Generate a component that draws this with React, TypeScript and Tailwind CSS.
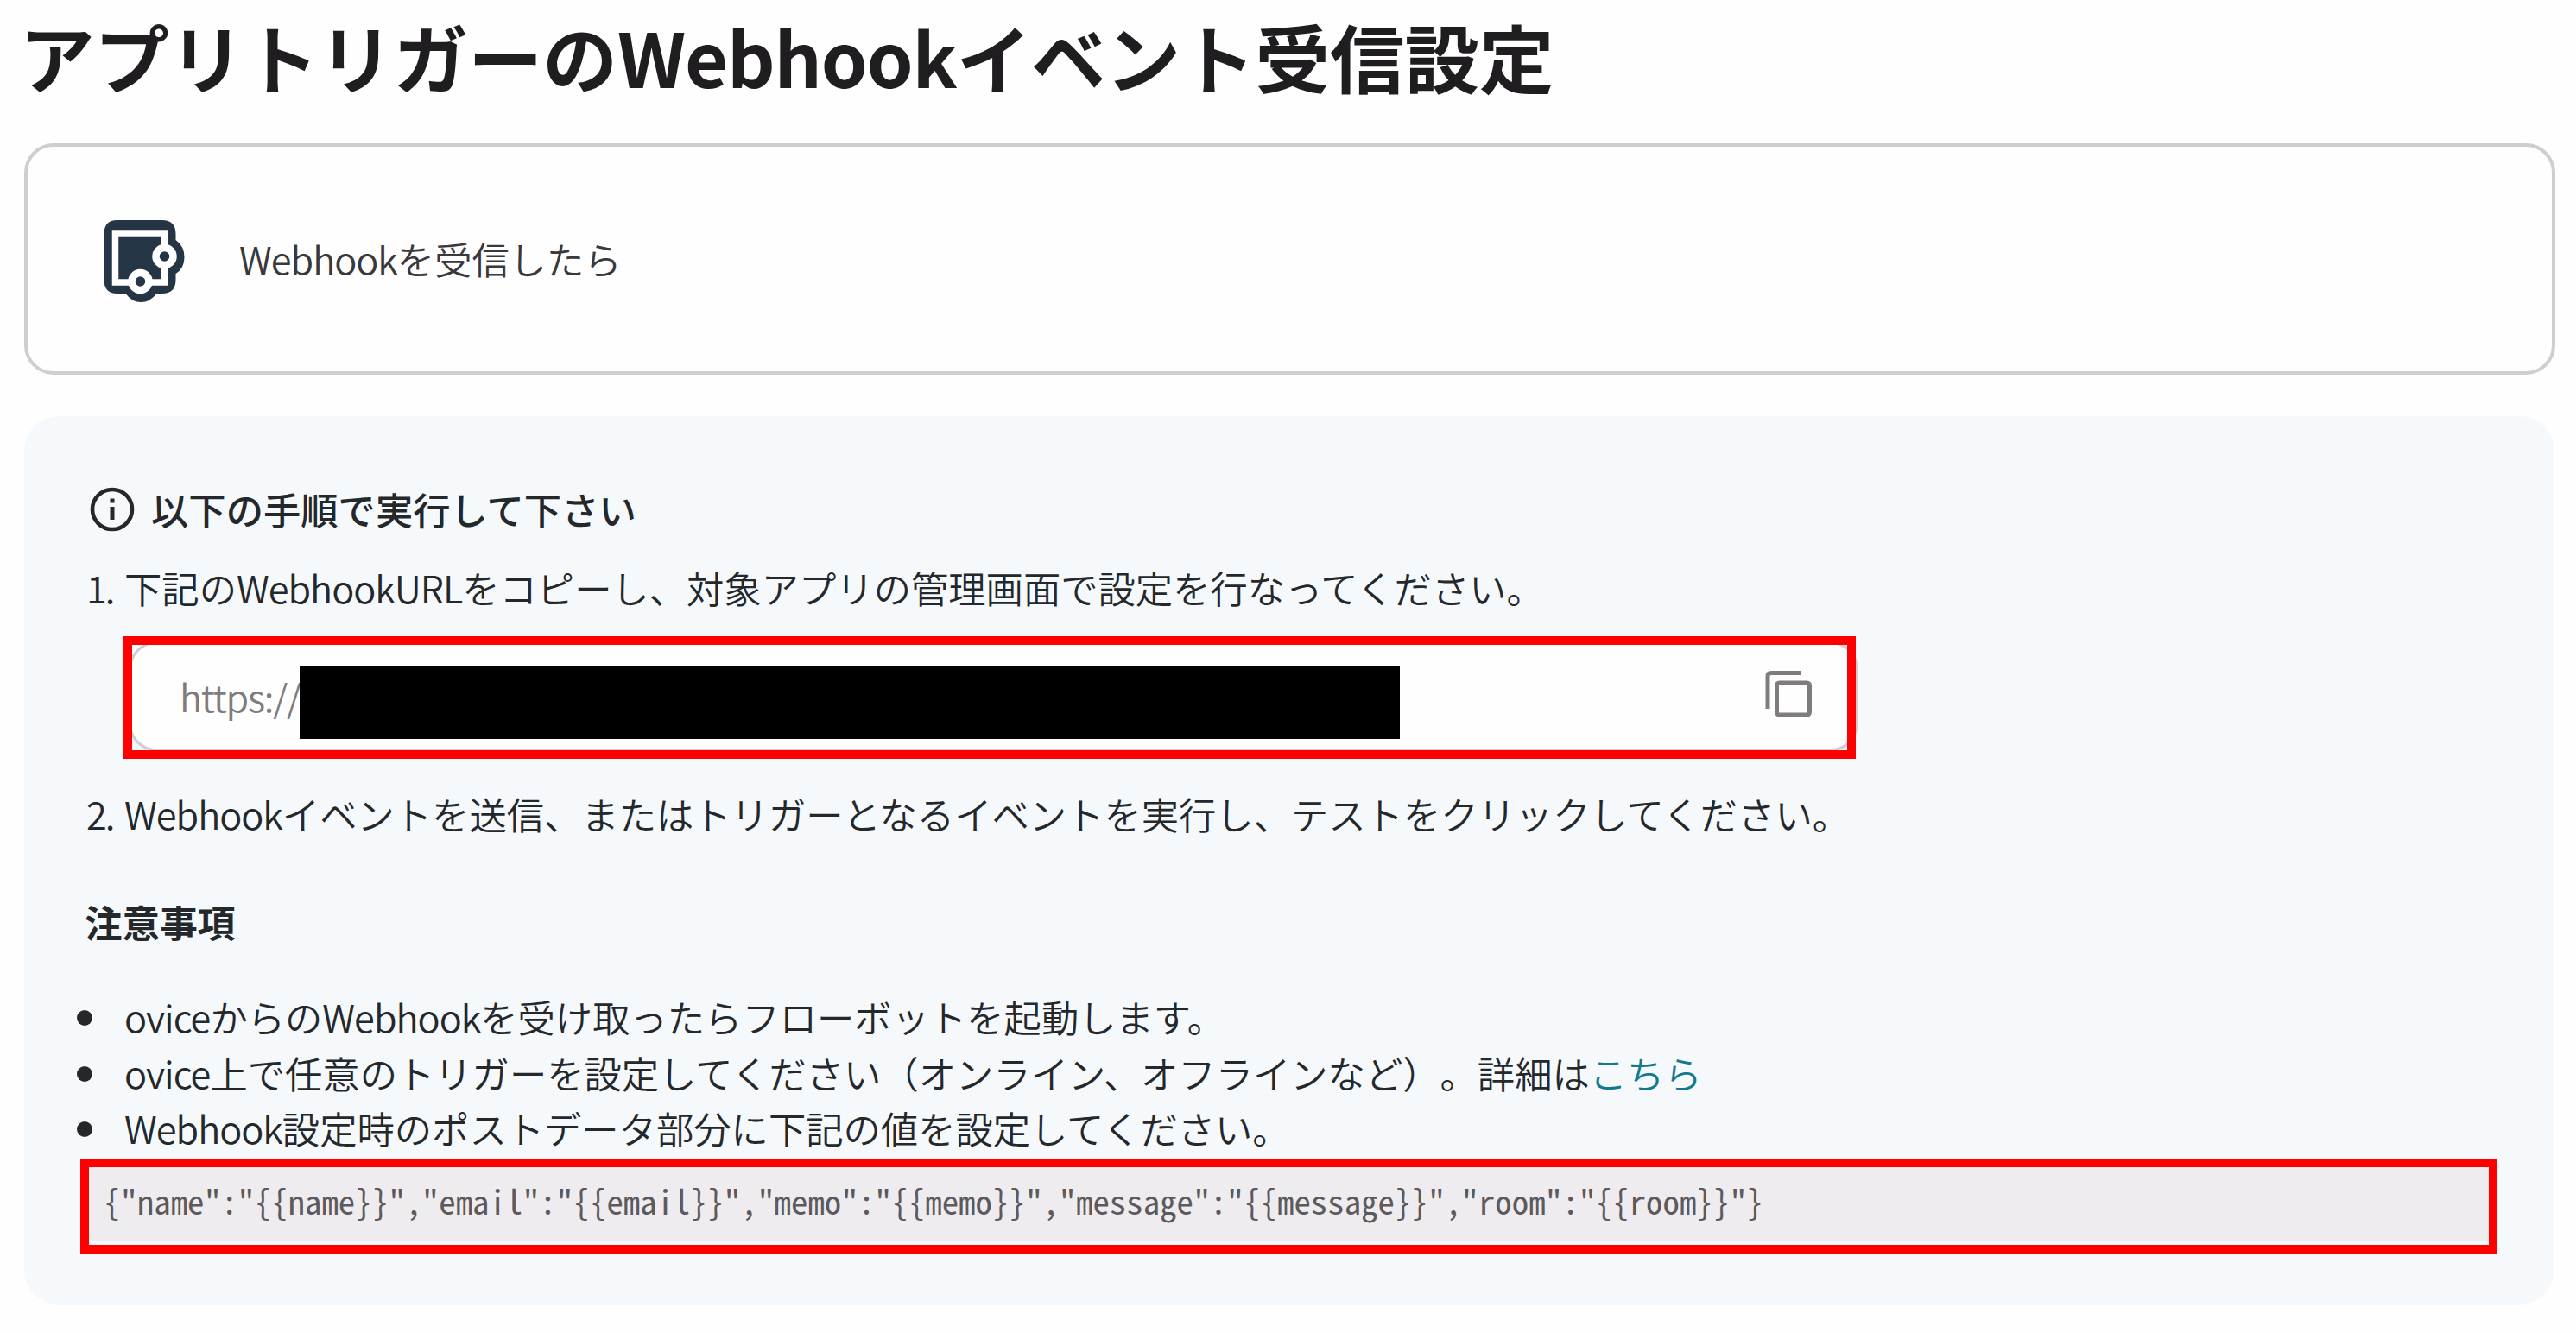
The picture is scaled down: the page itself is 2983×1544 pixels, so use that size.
import React from 'react';

const codeSample =
  '{"name":"{{name}}","email":"{{email}}","memo":"{{memo}}","message":"{{message}}","room":"{{room}}"}';

const WebhookIcon: React.FC = () => (
  <svg width="98" height="98" viewBox="0 0 97 98" fill="none">
    <path
      d="M16 1H68Q84 1 84 17V24Q94 31 94 44Q94 57 84 63V70Q84 86 68 86H62Q54 96 44 96Q33 96 26 86H16Q1 86 1 70V17Q1 1 16 1Z"
      fill="#263545"
    />
    <rect x="14" y="16" width="57" height="57" stroke="#fff" strokeWidth="7.5" />
    <circle cx="71" cy="43" r="10" fill="#263545" stroke="#fff" strokeWidth="8.5" />
    <circle cx="43" cy="72" r="10" fill="#263545" stroke="#fff" strokeWidth="8.5" />
  </svg>
);

const InfoIcon: React.FC = () => (
  <svg width="52" height="52" viewBox="0 0 52 52" fill="none">
    <circle cx="26" cy="26" r="23" stroke="#24282b" strokeWidth="4.6" />
    <path d="M26 23V38M26 13.5V18.5" stroke="#24282b" strokeWidth="5" />
  </svg>
);

const CopyIcon: React.FC = () => (
  <svg width="54" height="56" viewBox="0 0 54 56" fill="none" stroke="#7f7b7f" strokeWidth="5">
    <path d="M3 45V7Q3 3.500 7 3.500H41" />
    <rect x="13.500" y="15" width="38" height="37" rx="3" />
  </svg>
);

// Latin words sit a little tighter than the kana around them
const Latin: React.FC<{ children: React.ReactNode }> = ({ children }) => (
  <span className="tracking-[-1px]">{children}</span>
);

const NoteItem: React.FC<{ children: React.ReactNode }> = ({ children }) => (
  <li className="flex items-start">
    <span className="mt-[25px] mr-[37px] -ml-[4px] size-[18px] rounded-full bg-[#24282b]" />
    <p>{children}</p>
  </li>
);

const App: React.FC = () => {
  return (
    <div className="flex h-[1544px] w-[2983px] flex-col overflow-hidden bg-[#fefefe] pl-7 font-['Noto_Sans_CJK_JP',sans-serif] text-[43.32px] font-[350] text-[#24282b] [text-spacing-trim:space-all]">
      <h1 className="mt-[3px] -ml-[5px] h-[163px] whitespace-nowrap text-[86.5px] leading-[124px] font-bold text-[#1f1d20]">
        アプリトリガーの<span className="tracking-[-1.2px]">Webhook</span>イベント受信設定
      </h1>

      <section className="flex h-[268px] w-[2931px] shrink-0 items-center rounded-[34px] border-4 border-[#d0cdd0] pl-[87px]">
        <div className="mt-[5px]">
          <WebhookIcon />
        </div>
        <p className="mb-[3px] ml-[60px] leading-[64px] text-[#3a383b]">
          <Latin>Webhook</Latin>を受信したら
        </p>
      </section>

      <section className="mt-[48px] h-[1029px] w-[2930px] shrink-0 rounded-[40px] bg-[#f5f9fc] pt-[76px] pl-[65px]">
        <div className="flex h-[64px] items-center pl-[11px]">
          <InfoIcon />
          <h2 className="mb-[2px] ml-[19px] leading-[64px] font-medium">以下の手順で実行して下さい</h2>
        </div>

        <div className="mt-[26px] flex h-[64px] items-center pl-[7px] leading-[64px]">
          <span className="w-[44px] tracking-[-2px]">1.</span>
          <p>
            下記の<Latin>WebhookURL</Latin>をコピーし、対象アプリの管理画面で設定を行なってください。
          </p>
        </div>

        <div className="relative mt-[25px] ml-[50px] h-[142px] w-[2009px] py-[6px] pl-[6px]">
          <div className="flex h-[127px] w-full items-center rounded-[32px] border-3 border-[#d0cdd0] bg-[#fefefe] pl-[56px]">
            <span className="w-[139px] tracking-[-1.2px] text-[#7f7b7f]">https://</span>
            <div className="mt-[13px] h-[85px] w-[1274px] bg-black" />
            <button type="button" className="-mt-[5px] ml-[423px]">
              <CopyIcon />
            </button>
          </div>
          {/* highlight frame over the field */}
          <div className="absolute top-0 left-0 h-[142px] w-[2006px] border-10 border-[#ff0000]" />
        </div>

        <div className="mt-[31px] flex h-[64px] items-center pl-[7px] leading-[64px]">
          <span className="w-[44px] tracking-[-2px]">2.</span>
          <p>
            <Latin>Webhook</Latin>イベントを送信、またはトリガーとなるイベントを実行し、テストをクリックしてください。
          </p>
        </div>

        <h3 className="mt-[61px] pl-[5px] text-[43.6px] leading-[64px] font-bold">注意事項</h3>

        <ul className="mt-[46px] leading-[64.6px]">
          <NoteItem>
            <Latin>ovice</Latin>からの<Latin>Webhook</Latin>を受け取ったらフローボットを起動します。
          </NoteItem>
          <NoteItem>
            <Latin>ovice</Latin>上で任意のトリガーを設定してください（オンライン、オフラインなど）。詳細は
            <a className="text-[#127a8c]">こちら</a>
          </NoteItem>
          <NoteItem>
            <Latin>Webhook</Latin>設定時のポストデータ部分に下記の値を設定してください。
          </NoteItem>
        </ul>

        <div className="mt-[3px] h-[110px] w-[2799px] border-10 border-[#ff0000] pb-[4px]">
          <pre className="h-full bg-[#efecef] pl-[17px] font-['Noto_Sans_Mono_CJK_JP','Liberation_Mono',monospace] text-[38.85px] leading-[76px] font-normal text-[#5c5a5d]">
            {codeSample}
          </pre>
        </div>
      </section>
    </div>
  );
};

export default App;
